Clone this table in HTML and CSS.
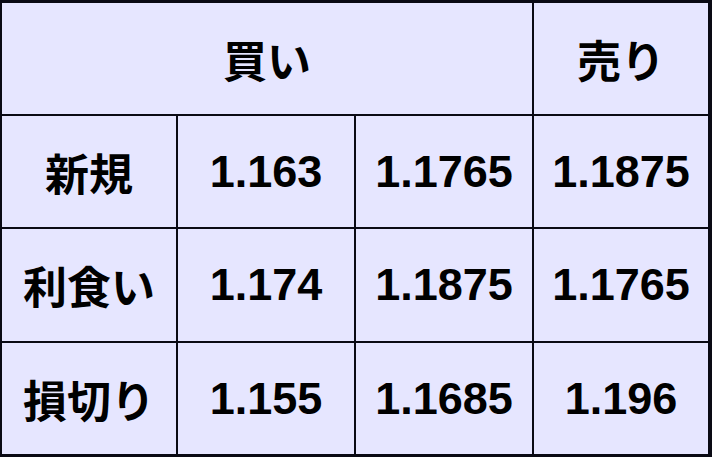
FILE: index.html
```html
<!DOCTYPE html>
<html lang="ja">
<head>
<meta charset="utf-8">
<title>価格表</title>
<link rel="stylesheet" href="styles.css">
</head>
<body>
<div class="table">
  <div class="cell head span3">買い</div>
  <div class="cell head">売り</div>

  <div class="cell label">新規</div>
  <div class="cell num">1.163</div>
  <div class="cell num">1.1765</div>
  <div class="cell num">1.1875</div>

  <div class="cell label">利食い</div>
  <div class="cell num">1.174</div>
  <div class="cell num">1.1875</div>
  <div class="cell num">1.1765</div>

  <div class="cell label">損切り</div>
  <div class="cell num">1.155</div>
  <div class="cell num">1.1685</div>
  <div class="cell num">1.196</div>
</div>
</body>
</html>
```

FILE: styles.css
```css
html, body {
  margin: 0;
  padding: 0;
  background: #e6e6ff;
}

.table {
  display: grid;
  grid-template-columns: 174px 176px 176px 174px;
  grid-template-rows: 111px 111px 112px 111px;
  gap: 2px;
  padding: 3px 4px 3px 2px;
  background: #0a0a14;
  width: 712px;
  height: 457px;
  box-sizing: border-box;
}

.cell {
  background: #e6e6ff;
  display: flex;
  align-items: center;
  justify-content: center;
  color: #000;
}

.span3 {
  grid-column: span 3;
}

.head,
.label {
  font-family: "Noto Sans CJK JP", "Noto Sans", sans-serif;
  font-weight: 700;
  font-size: 44px;
}

.num {
  font-family: "Liberation Sans", Arial, sans-serif;
  font-weight: 700;
  font-size: 45px;
}
```
